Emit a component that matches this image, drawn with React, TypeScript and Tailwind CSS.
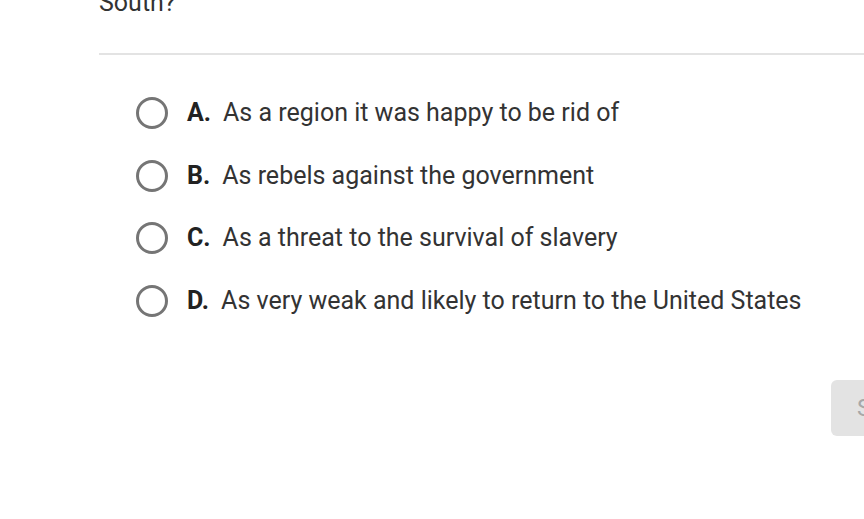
export default function App() {
  const options = [
    { l: "A.", t: "As a region it was happy to be rid of" },
    { l: "B.", t: "As rebels against the government" },
    { l: "C.", t: "As a threat to the survival of slavery" },
    { l: "D.", t: "As very weak and likely to return to the United States" },
  ];
  return (
    <div
      className="relative w-[864px] h-[519px] overflow-hidden bg-white text-[#333]"
      style={{ fontFamily: "Roboto, 'Liberation Sans', sans-serif" }}
    >
      <div className="pl-[99px] -mt-[13px]">
        <div className="text-[25px] leading-[32px] text-[#333]">South?</div>
        <div className="mt-[34px] h-[2px] bg-[#e3e3e3]" />
        <div className="pl-[37px] pt-[42px] flex flex-col gap-[30.5px]">
          {options.map((o) => (
            <div key={o.l} className="flex items-center h-[32px]">
              <div className="w-[32px] h-[32px] rounded-full border-[3px] border-[#757575] shrink-0" />
              <span className="ml-[19px] font-bold text-[25px] text-[#222]">{o.l}</span>
              <span className="ml-[12px] text-[25px] text-[#333]">{o.t}</span>
            </div>
          ))}
        </div>
      </div>
      <div className="absolute left-[831px] top-[380px] w-[120px] h-[56px] rounded-[6px] bg-[#e3e3e3] text-[#a8a8a8] text-[24px] pl-[26px] flex items-center">
        Submit
      </div>
    </div>
  );
}
